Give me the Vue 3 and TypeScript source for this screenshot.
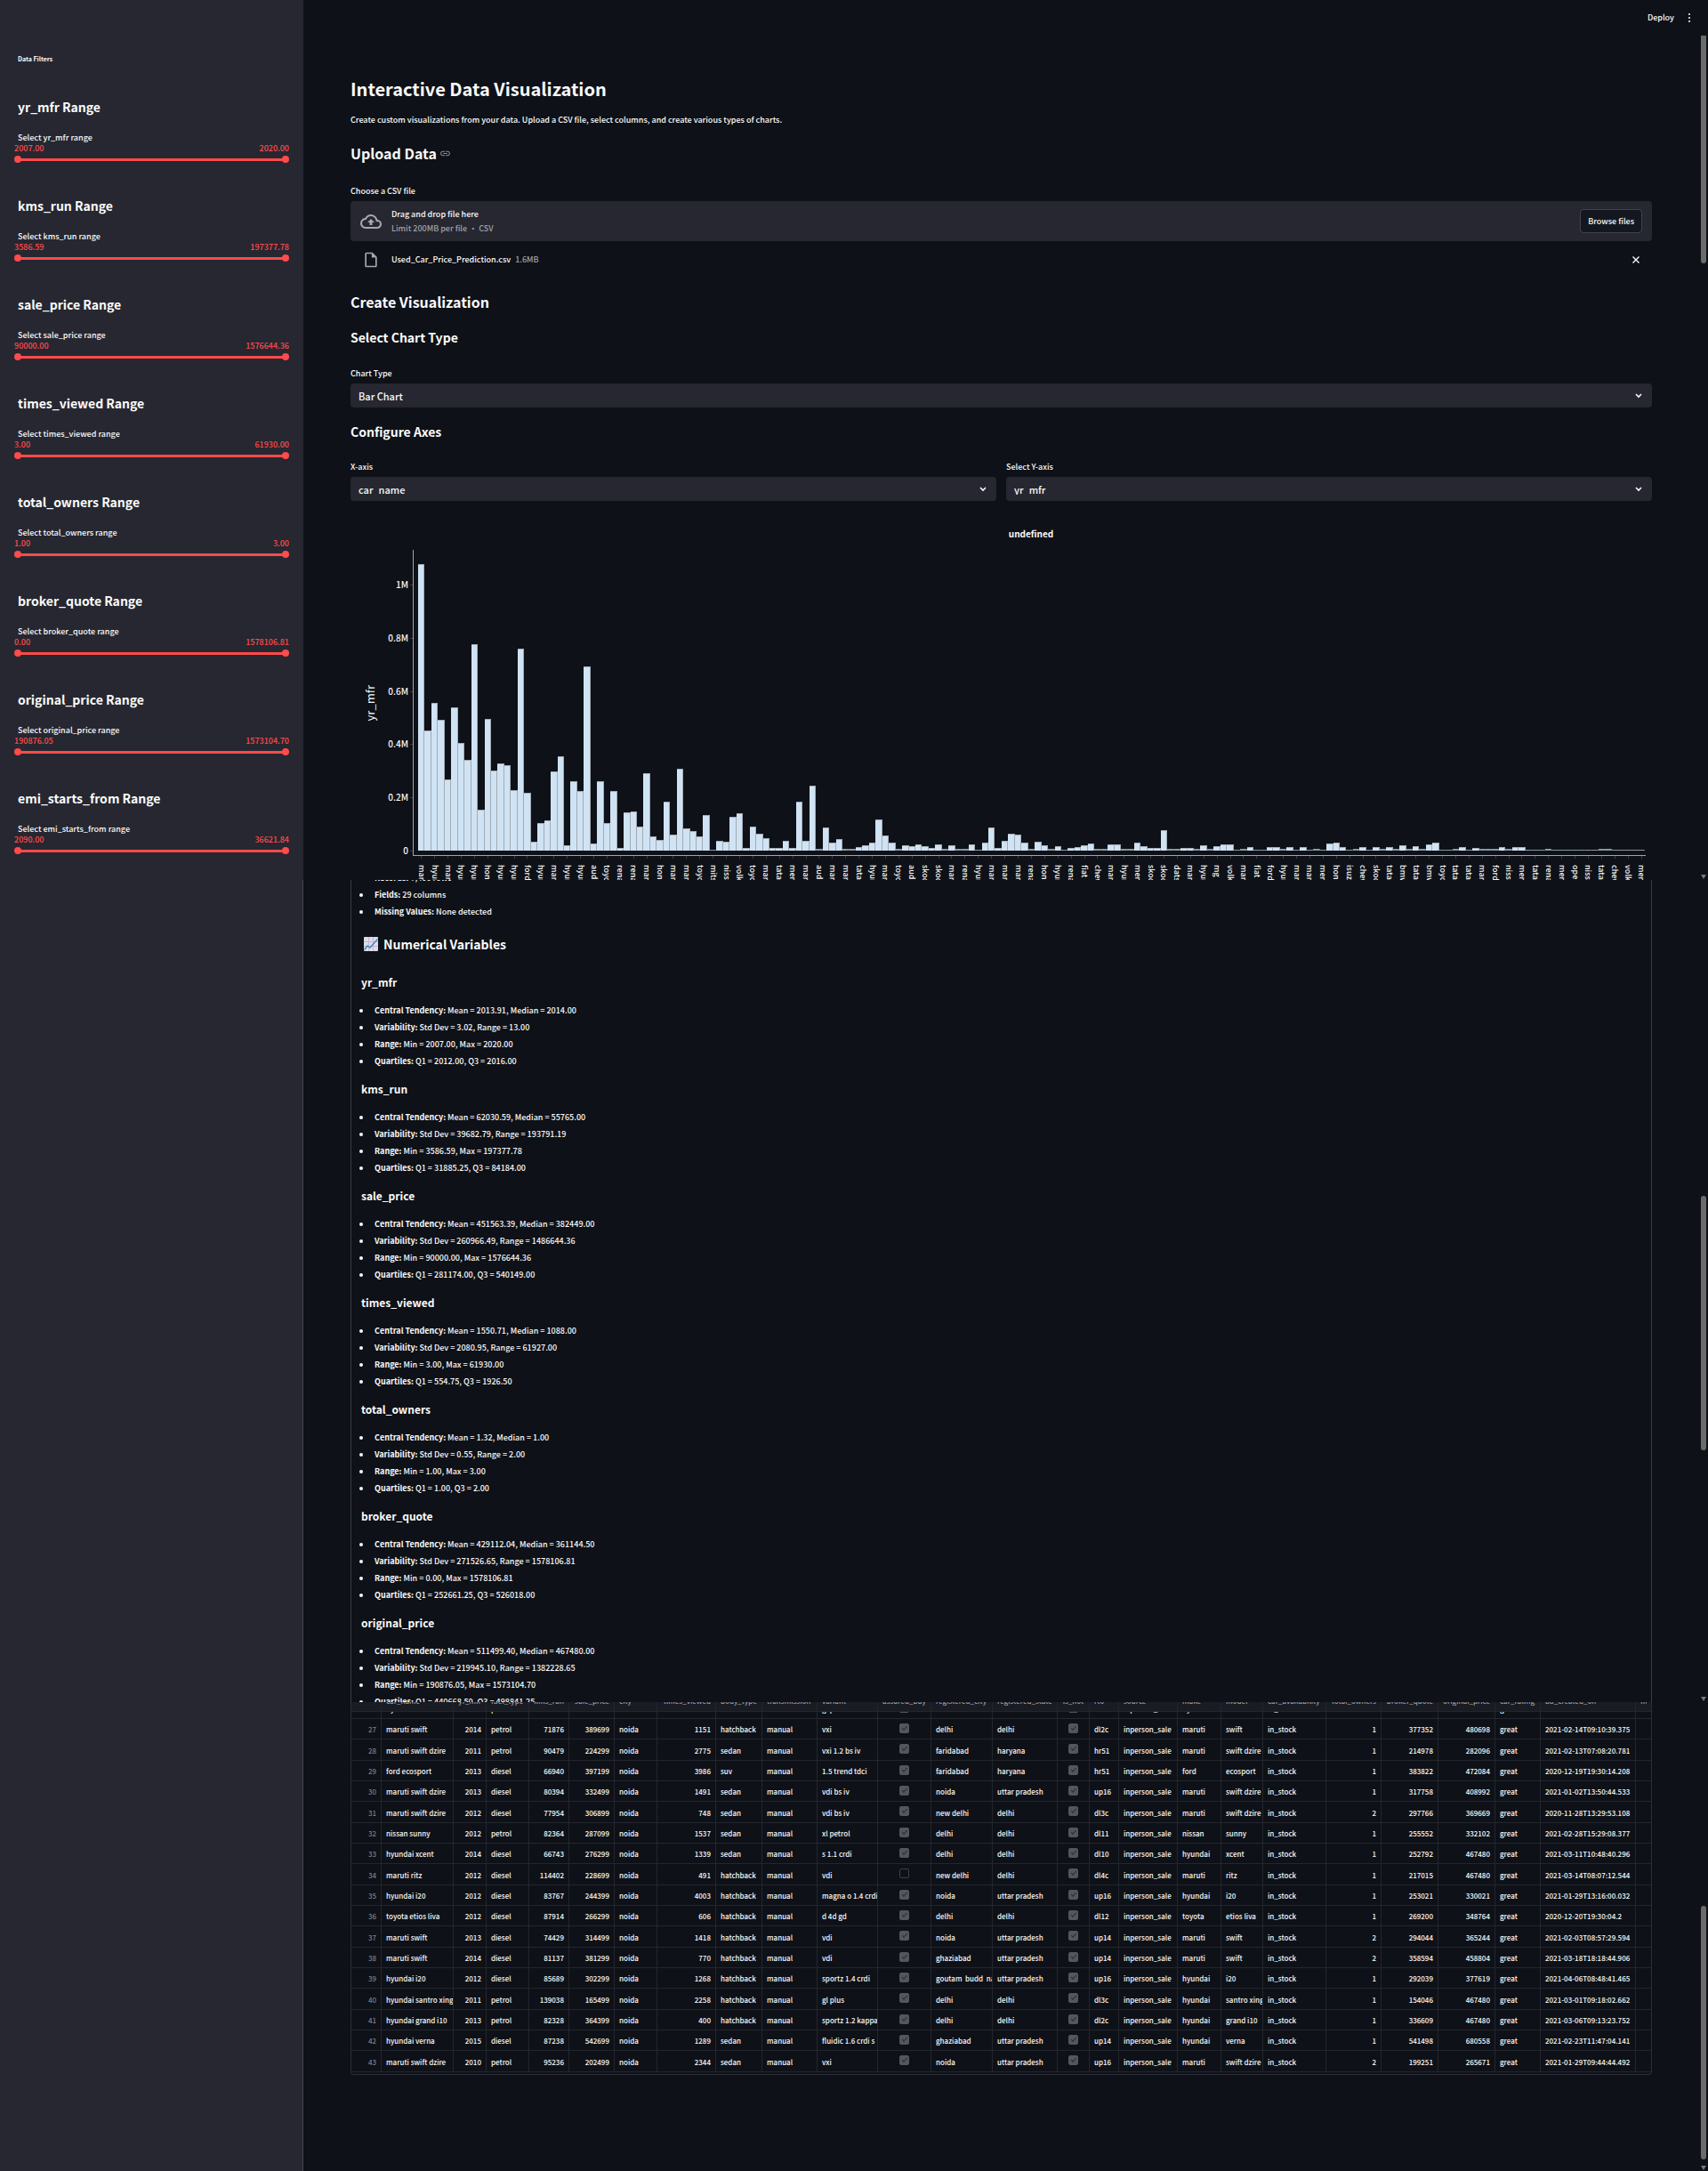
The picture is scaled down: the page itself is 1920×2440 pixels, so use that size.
<script setup lang="ts">
import { ref } from 'vue'

interface RangeFilter { name: string; min: string; max: string }
interface Summary { name: string; mean: string; median: string; std: string; range: string; min: string; max: string; q1: string; q3: string }
interface Column { title: string; width: number; kind?: 'num' | 'check' | 'index' }

const filters: RangeFilter[] = [
  { name: 'yr_mfr', min: '2007.00', max: '2020.00' },
  { name: 'kms_run', min: '3586.59', max: '197377.78' },
  { name: 'sale_price', min: '90000.00', max: '1576644.36' },
  { name: 'times_viewed', min: '3.00', max: '61930.00' },
  { name: 'total_owners', min: '1.00', max: '3.00' },
  { name: 'broker_quote', min: '0.00', max: '1578106.81' },
  { name: 'original_price', min: '190876.05', max: '1573104.70' },
  { name: 'emi_starts_from', min: '2090.00', max: '36621.84' },
]

const chartType = ref('Bar Chart')
const xAxis = ref('car_name')
const yAxis = ref('yr_mfr')

const yTicks = ['1M', '0.8M', '0.6M', '0.4M', '0.2M', '0']

// Bar heights in pixels, one per car name.
const bars: number[] = [
  322, 135, 166, 147, 80, 161, 121, 102, 232, 46, 148, 90, 98, 96, 68, 227, 65, 10, 31, 34,
  89, 106, 6, 78, 67, 207, 8, 78, 31, 67, 3, 43, 44, 27, 87, 16, 12, 55, 18, 92,
  25, 22, 16, 40, 1, 11, 10, 38, 42, 3, 27, 19, 14, 3, 3, 11, 3, 55, 11, 73,
  2, 26, 9, 13, 2, 2, 4, 6, 9, 35, 17, 9, 2, 6, 5, 7, 5, 3, 7, 2,
  6, 2, 2, 7, 1, 9, 26, 3, 11, 19, 18, 9, 2, 10, 6, 2, 5, 1, 3, 4,
  6, 8, 2, 2, 7, 7, 2, 2, 9, 5, 3, 3, 23, 2, 2, 3, 3, 2, 6, 2,
  5, 7, 7, 1, 2, 4, 1, 1, 4, 4, 2, 4, 1, 4, 1, 2, 1, 8, 9, 4,
  1, 2, 4, 1, 4, 2, 4, 2, 6, 2, 5, 2, 7, 9, 1, 1, 2, 4, 1, 3,
  2, 2, 2, 4, 2, 4, 4, 1, 1, 1, 2, 1, 1, 1, 1, 1, 1, 1, 2, 2,
  1, 1, 1, 1, 1,
]

const xLabels: string[] = (
  'maruti hyundai maruti hyundai hyundai honda hyundai hyundai ford hyundai maruti hyundai hyundai audi toyota renault renault ' +
  'maruti honda maruti maruti toyota mitsubishi nissan volkswagen toyota maruti tata mercedes maruti audi maruti maruti tata hyundai ' +
  'maruti toyota audi skoda skoda maruti renault hyundai maruti maruti maruti renault honda hyundai renault fiat chevrolet maruti hyundai ' +
  'mercedes skoda skoda datsun maruti hyundai mg volkswagen maruti fiat ford hyundai maruti maruti mercedes honda isuzu chevrolet skoda tata ' +
  'bmw tata bmw toyota tata tata maruti ford nissan mercedes tata renault mercedes opel nissan tata chevrolet volkswagen mercedes'
).split(' ')

const summaries: Summary[] = [
  { name: 'yr_mfr', mean: '2013.91', median: '2014.00', std: '3.02', range: '13.00', min: '2007.00', max: '2020.00', q1: '2012.00', q3: '2016.00' },
  { name: 'kms_run', mean: '62030.59', median: '55765.00', std: '39682.79', range: '193791.19', min: '3586.59', max: '197377.78', q1: '31885.25', q3: '84184.00' },
  { name: 'sale_price', mean: '451563.39', median: '382449.00', std: '260966.49', range: '1486644.36', min: '90000.00', max: '1576644.36', q1: '281174.00', q3: '540149.00' },
  { name: 'times_viewed', mean: '1550.71', median: '1088.00', std: '2080.95', range: '61927.00', min: '3.00', max: '61930.00', q1: '554.75', q3: '1926.50' },
  { name: 'total_owners', mean: '1.32', median: '1.00', std: '0.55', range: '2.00', min: '1.00', max: '3.00', q1: '1.00', q3: '2.00' },
  { name: 'broker_quote', mean: '429112.04', median: '361144.50', std: '271526.65', range: '1578106.81', min: '0.00', max: '1578106.81', q1: '252661.25', q3: '526018.00' },
  { name: 'original_price', mean: '511499.40', median: '467480.00', std: '219945.10', range: '1382228.65', min: '190876.05', max: '1573104.70', q1: '440668.50', q3: '498841.25' },
]

const columns: Column[] = [
  { title: '', width: 34, kind: 'index' },
  { title: 'car_name', width: 81 },
  { title: 'yr_mfr', width: 37, kind: 'num' },
  { title: 'fuel_type', width: 48 },
  { title: 'kms_run', width: 45, kind: 'num' },
  { title: 'sale_price', width: 51, kind: 'num' },
  { title: 'city', width: 48 },
  { title: 'times_viewed', width: 66, kind: 'num' },
  { title: 'body_type', width: 52 },
  { title: 'transmission', width: 62 },
  { title: 'variant', width: 68 },
  { title: 'assured_buy', width: 60, kind: 'check' },
  { title: 'registered_city', width: 69 },
  { title: 'registered_state', width: 73 },
  { title: 'is_hot', width: 36, kind: 'check' },
  { title: 'rto', width: 33 },
  { title: 'source', width: 66 },
  { title: 'make', width: 49 },
  { title: 'model', width: 47 },
  { title: 'car_availability', width: 71 },
  { title: 'total_owners', width: 62, kind: 'num' },
  { title: 'broker_quote', width: 64, kind: 'num' },
  { title: 'original_price', width: 64, kind: 'num' },
  { title: 'car_rating', width: 51 },
  { title: 'ad_created_on', width: 107 },
  { title: 'fitness_certificate', width: 0 },
]

// index | car | year | fuel | kms | price | views | body | variant | assured | reg. city | reg. state | rto | make | model | owners | quote | original | created
const source = `26|hyundai santro xing|2011|petrol|70000|165000|1200|hatchback|gl plus|1|noida|delhi|dl2c|hyundai|santro xing|1|150000|300000|2021-03-01
27|maruti swift|2014|petrol|71876|389699|1151|hatchback|vxi|1|delhi|delhi|dl2c|maruti|swift|1|377352|480698|2021-02-14T09:10:39.375
28|maruti swift dzire|2011|petrol|90479|224299|2775|sedan|vxi 1.2 bs iv|1|faridabad|haryana|hr51|maruti|swift dzire|1|214978|282096|2021-02-13T07:08:20.781
29|ford ecosport|2013|diesel|66940|397199|3986|suv|1.5 trend tdci|1|faridabad|haryana|hr51|ford|ecosport|1|383822|472084|2020-12-19T19:30:14.208
30|maruti swift dzire|2013|diesel|80394|332499|1491|sedan|vdi bs iv|1|noida|uttar pradesh|up16|maruti|swift dzire|1|317758|408992|2021-01-02T13:50:44.533
31|maruti swift dzire|2012|diesel|77954|306899|748|sedan|vdi bs iv|1|new delhi|delhi|dl3c|maruti|swift dzire|2|297766|369669|2020-11-28T13:29:53.108
32|nissan sunny|2012|petrol|82364|287099|1537|sedan|xl petrol|1|delhi|delhi|dl11|nissan|sunny|1|255552|332102|2021-02-28T15:29:08.377
33|hyundai xcent|2014|diesel|66743|276299|1339|sedan|s 1.1 crdi|1|delhi|delhi|dl10|hyundai|xcent|1|252792|467480|2021-03-11T10:48:40.296
34|maruti ritz|2012|diesel|114402|228699|491|hatchback|vdi|0|new delhi|delhi|dl4c|maruti|ritz|1|217015|467480|2021-03-14T08:07:12.544
35|hyundai i20|2012|diesel|83767|244399|4003|hatchback|magna o 1.4 crdi|1|noida|uttar pradesh|up16|hyundai|i20|1|253021|330021|2021-01-29T13:16:00.032
36|toyota etios liva|2012|diesel|87914|266299|606|hatchback|d 4d gd|1|delhi|delhi|dl12|toyota|etios liva|1|269200|348764|2020-12-20T19:30:04.2
37|maruti swift|2013|diesel|74429|314499|1418|hatchback|vdi|1|noida|uttar pradesh|up14|maruti|swift|2|294044|365244|2021-02-03T08:57:29.594
38|maruti swift|2014|diesel|81137|381299|770|hatchback|vdi|1|ghaziabad|uttar pradesh|up14|maruti|swift|2|358594|458804|2021-03-18T18:18:44.906
39|hyundai i20|2012|diesel|85689|302299|1268|hatchback|sportz 1.4 crdi|1|goutam  budd  nagar|uttar pradesh|up16|hyundai|i20|1|292039|377619|2021-04-06T08:48:41.465
40|hyundai santro xing|2011|petrol|139038|165499|2258|hatchback|gl plus|1|delhi|delhi|dl3c|hyundai|santro xing|1|154046|467480|2021-03-01T09:18:02.662
41|hyundai grand i10|2013|petrol|82328|364399|400|hatchback|sportz 1.2 kappa|1|delhi|delhi|dl2c|hyundai|grand i10|1|336609|467480|2021-03-06T09:13:23.752
42|hyundai verna|2015|diesel|87238|542699|1289|sedan|fluidic 1.6 crdi s|1|ghaziabad|uttar pradesh|up14|hyundai|verna|1|541498|680558|2021-02-23T11:47:04.141
43|maruti swift dzire|2010|petrol|95236|202499|2344|sedan|vxi|1|noida|uttar pradesh|up16|maruti|swift dzire|2|199251|265671|2021-01-29T09:44:44.492`

const rows: string[][] = source.split('\n').map((line) => {
  const [id, car, year, fuel, kms, price, views, body, variant, assured, city, state, rto, make, model, owners, quote, original, created] = line.split('|')
  return [id, car, year, fuel, kms, price, 'noida', views, body, 'manual', variant, assured, city, state, '1', rto, 'inperson_sale', make, model, 'in_stock', owners, quote, original, 'great', created, '']
})
</script>

<template>
  <div class="app">
    <aside class="sidebar">
      <h6 class="sidebar-title">Data Filters</h6>
      <section v-for="f in filters" :key="f.name" class="filter">
        <h3>{{ f.name }} Range</h3>
        <label :for="`min-${f.name}`">Select {{ f.name }} range</label>
        <div class="values"><span>{{ f.min }}</span><span>{{ f.max }}</span></div>
        <div class="slider">
          <input :id="`min-${f.name}`" type="range" min="0" max="100" value="0" />
          <input type="range" min="0" max="100" value="100" :aria-label="`${f.name} maximum`" />
        </div>
      </section>
    </aside>

    <main class="main">
      <section class="view view-top">
        <header class="toolbar">
          <button type="button" class="deploy">Deploy</button>
          <button type="button" class="dots" aria-label="Main menu">
            <svg viewBox="0 0 4 12"><circle cx="2" cy="2" r="1" /><circle cx="2" cy="6" r="1" /><circle cx="2" cy="10" r="1" /></svg>
          </button>
        </header>

        <h1>Interactive Data Visualization</h1>
        <p class="lead">Create custom visualizations from your data. Upload a CSV file, select columns, and create various types of charts.</p>

        <h2 class="with-link">
          Upload Data
          <a href="#upload-data" aria-label="Link to heading">
            <svg viewBox="0 0 24 24"><path d="M3.9 12c0-1.71 1.39-3.1 3.1-3.1h4V7H7c-2.76 0-5 2.24-5 5s2.24 5 5 5h4v-1.9H7c-1.71 0-3.1-1.39-3.1-3.1zM8 13h8v-2H8v2zm9-6h-4v1.9h4c1.71 0 3.1 1.39 3.1 3.1s-1.39 3.1-3.1 3.1h-4V17h4c2.76 0 5-2.24 5-5s-2.24-5-5-5z" /></svg>
          </a>
        </h2>

        <div class="label" id="upload-data">Choose a CSV file</div>
        <div class="uploader">
          <svg class="cloud" viewBox="0 0 24 24"><path d="M19.35 10.04A7.49 7.49 0 0 0 12 4C9.11 4 6.6 5.64 5.35 8.04A5.994 5.994 0 0 0 0 14c0 3.31 2.69 6 6 6h13c2.76 0 5-2.24 5-5 0-2.64-2.05-4.78-4.65-4.96zM19 18H6c-2.21 0-4-1.79-4-4 0-2.05 1.53-3.76 3.56-3.97l1.07-.11.5-.95A5.469 5.469 0 0 1 12 6c2.62 0 4.88 1.86 5.39 4.43l.3 1.5 1.53.11A2.98 2.98 0 0 1 22 15c0 1.65-1.35 3-3 3zM8 13h2.55v3h2.9v-3H16l-4-4z" /></svg>
          <div class="drop-text">
            <span>Drag and drop file here</span>
            <small>Limit 200MB per file • CSV</small>
          </div>
          <button type="button" class="browse">Browse files</button>
        </div>
        <div class="file">
          <svg class="doc" viewBox="0 0 24 24"><path d="M14 2H6c-1.1 0-1.99.9-1.99 2L4 20c0 1.1.89 2 1.99 2H18c1.1 0 2-.9 2-2V8l-6-6zM6 20V4h7v5h5v11H6z" /></svg>
          <span class="file-name">Used_Car_Price_Prediction.csv</span>
          <small>1.6MB</small>
          <button type="button" class="remove" aria-label="Remove file">
            <svg viewBox="0 0 10 10"><path d="M1.5 1.5l7 7M8.5 1.5l-7 7" /></svg>
          </button>
        </div>

        <h2 class="create">Create Visualization</h2>
        <h3 class="chart-heading">Select Chart Type</h3>
        <div class="field chart-type">
          <label for="chart-type">Chart Type</label>
          <div class="select-box">
            <div class="select-clip"><select id="chart-type" v-model="chartType"><option>Bar Chart</option></select></div>
            <svg viewBox="0 0 8 6"><path d="M1 1l3 3 3-3" /></svg>
          </div>
        </div>
        <h3 class="axes-heading">Configure Axes</h3>
        <div class="axes">
          <div class="field">
            <label for="x-axis">X-axis</label>
            <div class="select-box">
              <div class="select-clip"><select id="x-axis" v-model="xAxis"><option>car_name</option></select></div>
              <svg viewBox="0 0 8 6"><path d="M1 1l3 3 3-3" /></svg>
            </div>
          </div>
          <div class="field">
            <label for="y-axis">Select Y-axis</label>
            <div class="select-box">
              <div class="select-clip"><select id="y-axis" v-model="yAxis"><option>yr_mfr</option></select></div>
              <svg viewBox="0 0 8 6"><path d="M1 1l3 3 3-3" /></svg>
            </div>
          </div>
        </div>

        <figure class="chart">
          <figcaption>undefined</figcaption>
          <div class="chart-body">
            <div class="y-title"><span>yr_mfr</span></div>
            <div class="y-ticks"><span v-for="t in yTicks" :key="t">{{ t }}</span></div>
            <div class="plot">
              <div class="bars">
                <i v-for="(h, i) in bars" :key="i" :class="{ tiny: h < 3 }" :style="{ height: `${h}px` }"></i>
              </div>
            </div>
          </div>
          <div class="x-ticks">
            <div v-for="(b, i) in bars" :key="i" class="x-cell">
              <span v-if="i % 2 === 0">{{ xLabels[i / 2] }}</span>
            </div>
          </div>
        </figure>
        <div class="scroll-thumb first"></div>
        <div class="scroll-arrow"></div>
      </section>

      <section class="view view-summary">
        <div class="summary">
          <ul class="top-list">
            <li><b>Records:</b> 7,400 rows</li>
            <li><b>Fields:</b> 29 columns</li>
            <li><b>Missing Values:</b> None detected</li>
          </ul>
          <h3 class="numerical">
            <svg viewBox="0 0 16 16">
              <rect width="16" height="16" rx="1" fill="#e0dbe8" />
              <path d="M0 5.5h16M0 10.5h16M5.5 0v16M10.5 0v16" stroke="#c3b7d2" stroke-width="1" />
              <path d="M0.5 14.5L4 10l3 2 8.5-9.5" fill="none" stroke="#3b88c3" stroke-width="1.5" />
            </svg>
            Numerical Variables
          </h3>
          <template v-for="s in summaries" :key="s.name">
            <h4>{{ s.name }}</h4>
            <ul>
              <li><b>Central Tendency:</b> Mean = {{ s.mean }}, Median = {{ s.median }}</li>
              <li><b>Variability:</b> Std Dev = {{ s.std }}, Range = {{ s.range }}</li>
              <li><b>Range:</b> Min = {{ s.min }}, Max = {{ s.max }}</li>
              <li><b>Quartiles:</b> Q1 = {{ s.q1 }}, Q3 = {{ s.q3 }}</li>
            </ul>
          </template>
        </div>
        <div class="scroll-thumb second"></div>
        <div class="scroll-arrow"></div>
      </section>

      <section class="view view-table">
        <div class="grid">
          <table>
            <colgroup>
              <col v-for="c in columns" :key="c.title" :style="c.width ? { width: `${c.width}px` } : undefined" />
            </colgroup>
            <thead>
              <tr>
                <th v-for="c in columns" :key="c.title" :class="c.kind"><div class="cut"><span>{{ c.title }}</span></div></th>
              </tr>
            </thead>
            <tbody>
              <tr v-for="(r, n) in rows" :key="r[0]" :class="{ partial: n === 0 }">
                <td v-for="(c, i) in columns" :key="c.title" :class="c.kind">
                  <div class="cut">
                    <span v-if="c.kind === 'check'" class="tick"><input type="checkbox" :checked="r[i] === '1'" disabled :aria-label="c.title" /></span>
                    <span v-else>{{ r[i] }}</span>
                  </div>
                </td>
              </tr>
            </tbody>
          </table>
        </div>
        <div class="scroll-thumb third"></div>
        <div class="scroll-arrow"></div>
      </section>
    </main>
  </div>
</template>

<style>
body { background: #0e1117; }
</style>

<style scoped>
.app {
  display: flex;
  border-bottom: 1px solid #75777b;
  color: #fafafa;
  font: 500 9px/16px "Noto Sans CJK SC", sans-serif;
}
h1, h2, h3, h4, h6, p, ul, figure { margin: 0; padding: 0; }
button, select { font: inherit; color: inherit; background: none; border: 0; padding: 0; margin: 0; }
.app svg { display: block; fill: currentColor; flex: none; }
h2 { font-size: 16px; line-height: 24px; font-weight: 700; }
h3 { font-size: 14px; line-height: 20px; font-weight: 700; }
h4 { font-size: 12px; line-height: 20px; font-weight: 700; }

/* Sidebar */
.sidebar { flex: 0 0 309px; padding: 58px 16px 0; background: #262730; }
.sidebar-title { padding-left: 4px; font-size: 7px; line-height: 16px; font-weight: 700; }
.filter { padding-top: 38px; }
.sidebar-title + .filter { padding-top: 36px; }
.filter h3 { padding-left: 4px; }
.filter label { display: block; padding: 19px 0 0 4px; line-height: 12px; }
.values { display: flex; justify-content: space-between; color: #ff4b4b; line-height: 12px; }
.slider { position: relative; height: 8px; margin-top: 2px; background: linear-gradient(#ff4b4b, #ff4b4b) center / calc(100% - 8px) 3px no-repeat; }
.slider input { position: absolute; inset: 0; width: 100%; height: 8px; margin: 0; appearance: none; background: none; pointer-events: none; }
.slider input::-webkit-slider-thumb { appearance: none; width: 8px; height: 8px; border-radius: 50%; background: #ff4b4b; pointer-events: auto; }

/* Stacked views */
.main { flex: 1; min-width: 0; }
.view { position: relative; overflow: hidden; padding: 0 63px 0 53px; }
.view-summary, .view-table { margin-left: -1px; border-left: 1px solid #45464e; }
.scroll-thumb { position: absolute; right: 2px; width: 6px; border-radius: 3px; background: #6b6b6b; }
.scroll-thumb.first { top: 40px; height: 256px; border-radius: 0 0 3px 3px; }
.scroll-thumb.second { bottom: 283px; height: 286px; }
.scroll-thumb.third { bottom: 13px; height: 285px; }
.scroll-arrow { position: absolute; right: 2px; bottom: 1px; border: 3px solid transparent; border-top: 5px solid #77787b; border-bottom: 0; }

/* Toolbar */
.toolbar { display: flex; justify-content: flex-end; align-items: center; gap: 15px; height: 40px; margin-right: -44px; }
.dots { width: 4px; height: 12px; }

h1 { margin-top: 44px; font-size: 20px; line-height: 32px; font-weight: 700; }
.lead { margin-top: 9px; line-height: 20px; }
.with-link { display: flex; align-items: center; gap: 3px; margin-top: 15px; }
.with-link a { color: #8b8d93; }
.with-link svg { width: 13px; height: 13px; }
.label { margin-top: 23px; }
.uploader { display: flex; align-items: center; height: 45px; margin-top: 3px; padding: 0 11px; border-radius: 4px; background: #262730; }
.cloud { width: 24px; height: 24px; color: #a3a8b4; }
.drop-text { display: grid; margin-left: 11px; }
small { font-size: 9px; color: #a0a1a6; }
.browse { height: 27px; margin-left: auto; padding: 0 8px; border: 1px solid #41444c; border-radius: 4px; background: #131720; }
.file { display: flex; align-items: center; height: 24px; margin-top: 9px; padding: 0 11px 0 13px; }
.doc { width: 20px; height: 20px; color: #a3a8b4; }
.file-name { margin: 0 5px 0 13px; }
.remove { width: 10px; height: 10px; margin-left: auto; margin-right: 2px; }
.remove path { stroke: #fafafa; stroke-width: 1.4; }
.create { margin-top: 23px; }
.chart-heading { margin-top: 18px; }
.field { flex: 1; }
.field label { display: block; }
.chart-type { margin-top: 23px; }
.select-box { display: flex; align-items: center; height: 27px; margin-top: 3px; padding: 0 11px 0 9px; border-radius: 4px; background: #262730; }
.select-clip { flex: 1; height: 13px; overflow: hidden; }
select { display: block; appearance: none; width: 100%; height: 20px; margin-top: -3px; outline: 0; font-size: 11px; line-height: 16px; }
.select-box svg { width: 8px; height: 6px; fill: none; stroke: #fafafa; stroke-width: 1.6; }
.axes-heading { margin-top: 17px; }
.axes { display: flex; gap: 11px; margin-top: 22px; }

/* Bar chart */
.chart { margin-top: 29px; }
.chart figcaption { padding-left: 67px; text-align: center; font-size: 10px; font-weight: 700; }
.chart-body { display: flex; margin-top: 10px; }
.y-title { display: flex; justify-content: center; align-items: center; width: 44px; }
.y-title span { writing-mode: vertical-rl; transform: rotate(180deg); font-size: 13px; line-height: 18px; font-weight: 400; }
.y-ticks { display: flex; flex-direction: column; justify-content: space-between; width: 26px; padding-top: 33px; text-align: right; font-size: 10px; line-height: 12px; }
.y-ticks span { position: relative; right: 5px; }
.y-ticks span::after { content: ""; position: absolute; right: -5px; top: 6px; width: 3px; height: 1px; background: #3a3d45; }
.plot { flex: 1; height: 343px; margin-right: 7px; border-left: 1px solid #a0a3a8; border-bottom: 1px solid #a0a3a8; }
.bars { display: flex; align-items: flex-end; height: 338px; padding-left: 5px; }
.bars i { flex: 1 1 0; min-width: 0; box-sizing: border-box; background: #cfe3f4; border: 1px solid #a3abb2; border-width: 1px 1px 0 0; }
.bars i.tiny { border-top-width: 0; border-right-color: #77848e; background: #8b9aa5; }
.x-ticks { display: flex; height: 27px; margin: 0 7px 0 76px; overflow: hidden; }
.x-cell { flex: 1 1 0; min-width: 0; display: flex; justify-content: center; }
.x-cell span { flex: none; width: 12px; padding-top: 10px; writing-mode: vertical-rl; line-height: 12px; white-space: nowrap; font-size: 9px; background: linear-gradient(#3a3d45, #3a3d45) center top / 1px 3px no-repeat; }

/* Statistics */
.summary { padding-left: 11px; border: 1px solid #3a3c43; border-width: 0 1px; }
.summary li { list-style: none; position: relative; padding-left: 15px; line-height: 19px; }
.summary li::before { content: ""; position: absolute; left: -2px; top: 8px; width: 4px; height: 4px; border-radius: 50%; background: #fafafa; }
.top-list { margin-top: -12px; }
.numerical { display: flex; align-items: center; gap: 6px; margin: 17px 0 0 3px; }
.numerical svg { width: 16px; height: 16px; }
h4 { margin: 12px 0; }
.numerical + h4 { margin-top: 23px; }
.summary ul:last-child { margin-bottom: -9px; }

/* Data grid */
.view-table { padding-bottom: 108px; }
.grid { padding-bottom: 2px; border: 1px solid #2b2e36; border-top: 0; border-radius: 0 0 4px 4px; overflow: hidden; }
table { width: 100%; table-layout: fixed; border-collapse: separate; border-spacing: 0; font-size: 8px; }
th, td { padding: 0 5px; border: 1px solid #23262d; border-width: 0 1px 1px 0; text-align: left; white-space: pre; overflow: hidden; }
td { height: 22px; }
tbody tr:nth-child(3n) td { height: 23px; }
th:last-child, td:last-child { border-right: 0; }
th { color: #9b9da3; background: #1a1c24; font-weight: 500; }
.num, .index { text-align: right; }
td.index { color: #7d7f85; }
.cut span { display: block; padding-top: 2px; line-height: 20px; }
thead .cut, .partial .cut { display: flex; align-items: flex-end; overflow: hidden; }
thead .cut { height: 10px; }
thead .cut span { flex: 1; padding: 0; line-height: 22px; }
tbody .partial td { height: 7px; }
.partial .cut { height: 7px; }
.partial .cut span { flex: 1; }
thead .check { text-align: center; }
.cut .tick { display: flex; justify-content: center; align-items: center; height: 20px; padding: 0 0 2px; }
.tick input { appearance: none; display: grid; place-items: center; width: 11px; height: 11px; margin: 0; border: 1px solid #3c3f46; border-radius: 2px; }
.tick input:checked { background: #54565c; border-color: #54565c; }
.tick input:checked::before { content: ""; width: 5px; height: 2px; margin-top: -2px; border: solid #2a2c33; border-width: 0 0 1px 1px; transform: rotate(-45deg); }
</style>
